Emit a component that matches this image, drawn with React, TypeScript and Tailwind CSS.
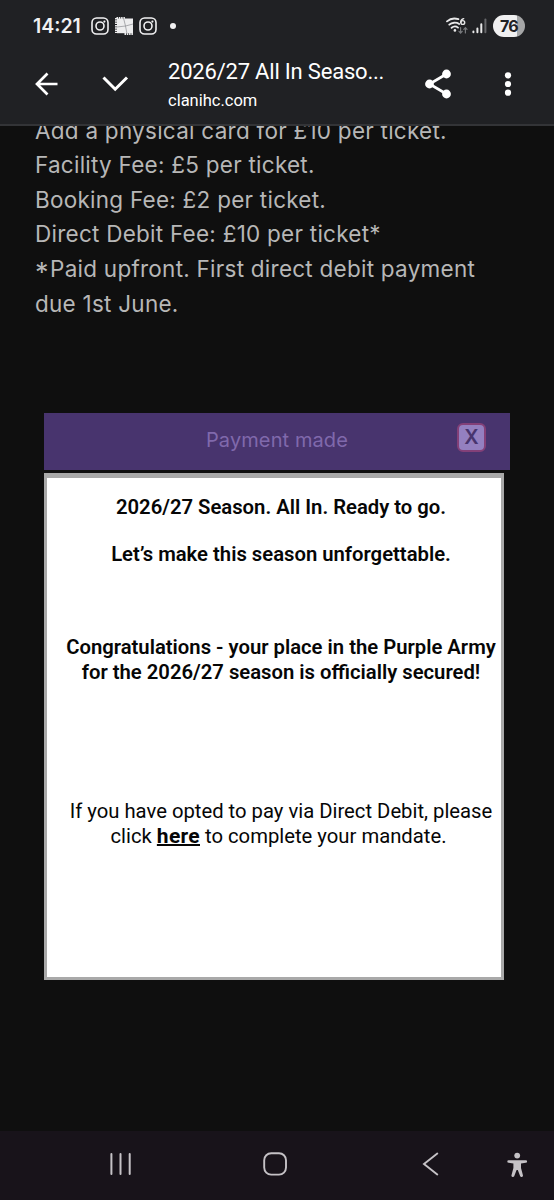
import { ReactNode } from 'react';
import clsx from 'clsx';

function InstagramIcon({ className }: { className?: string }) {
    return (
        <svg viewBox="0 0 18 18" className={clsx('h-[18px] w-[18px] shrink-0', className)} fill="none" stroke="#f1f1f2">
            <rect x="1" y="1" width="16" height="16" rx="4.6" strokeWidth="1.6" />
            <circle cx="9" cy="9" r="4" strokeWidth="1.6" />
            <circle cx="13.4" cy="4.6" r="1.1" fill="#f1f1f2" stroke="none" />
        </svg>
    );
}

function PhotoIcon({ className }: { className?: string }) {
    return (
        <svg viewBox="0 0 18 18" className={clsx('h-[18px] w-[18px] shrink-0', className)} fill="none">
            <path d="M2 1.5h16v14.7H2z" fill="#ededee" />
            <path d="M1 1v15M9.5 17H18" stroke="#ededee" strokeWidth="2" strokeDasharray="1.5 0.8" />
            <path d="M1.5 1H10" stroke="#ededee" strokeWidth="2" strokeDasharray="1.5 0.8" />
            <path d="M8.5 1l2 8 1.5 8M2 10l8.5-1L18 7" stroke="#8b8d90" strokeWidth="0.7" />
        </svg>
    );
}

function StatusBar() {
    return (
        <div className="flex h-[52px] items-center justify-between pl-[33px] pr-[29px]">
            <div className="flex items-center">
                <span className="w-[57.5px] whitespace-nowrap font-['Inter',sans-serif] text-[19.5px] font-semibold leading-6 text-[#f1f1f2]">
                    14:21
                </span>
                <InstagramIcon />
                <PhotoIcon className="ml-1.5" />
                <InstagramIcon className="ml-[6.5px]" />
                <span className="ml-[13px] h-1.5 w-1.5 rounded-full bg-[#f1f1f2]" />
            </div>
            <div className="flex items-center">
                <svg viewBox="0 0 22 18" className="h-[18px] w-[22px]" fill="none" strokeLinecap="round">
                    <path d="M1 4.4C4 1.7 8.6 1 12.4 2.2M3.3 7.7C5.8 5.4 10.2 5 13.2 7M5.6 10.8c2-1.7 4.6-1.7 6.4-.2" stroke="#e8e8e9" strokeWidth="1.8" />
                    <circle cx="8.9" cy="13.4" r="1.3" fill="#e8e8e9" />
                    <path d="M17.7 1.6c-2 .4-3 1.8-3 3.8" stroke="#e8e8e9" strokeWidth="1.4" />
                    <circle cx="16.8" cy="5.5" r="1.9" stroke="#e8e8e9" strokeWidth="1.4" />
                    <path d="M14.6 10.7v5M13 14.3l1.6 1.7 1.6-1.7M19.4 16v-5M17.8 12.4l1.6-1.7 1.6 1.7" stroke="#77797c" strokeWidth="1.2" />
                </svg>
                <svg viewBox="0 0 16 16" className="ml-1 h-4 w-4" strokeWidth="2" strokeLinecap="round">
                    <path d="M1.4 13.4v.8M5.4 10.5v3.7M9.3 6.3v7.9" stroke="#e8e8e9" />
                    <path d="M13.4 1.4v12.8" stroke="#66676a" />
                </svg>
                <div className="ml-[5px] flex h-[22px] w-8 items-center justify-center rounded-full bg-linear-to-r from-[#f0f0f1] from-76% to-[#a5a6a7] to-76% font-['Inter',sans-serif] text-[16px] font-bold tracking-[-0.8px] text-[#202124]">
                    76
                </div>
            </div>
        </div>
    );
}

function Toolbar() {
    return (
        <div className="flex h-[72px] items-start">
            <svg viewBox="0 0 24 24" className="ml-[34px] mt-5 h-6 w-6" fill="none" stroke="#fff" strokeWidth="2.7">
                <path d="M23.5 12H3M13.5 1.5L3 12l10.5 10.5" />
            </svg>
            <svg viewBox="0 0 28 18" className="ml-[43px] mt-[23px] h-[18px] w-7" fill="none" stroke="#fff" strokeWidth="3">
                <path d="M2.5 2.5L14.2 14.2 26 2.5" />
            </svg>
            <div className="ml-[39px] w-[240px] whitespace-nowrap font-['Roboto',sans-serif] text-white">
                <div className="mt-[6px] text-[22px] leading-7 tracking-[-0.2px]">2026/27 All In Seaso...</div>
                <div className="mt-[5px] text-[16.5px] leading-5">clanihc.com</div>
            </div>
            <svg viewBox="0 0 28 30" className="ml-[16px] mt-[17px] h-[30px] w-7" fill="#fff">
                <path d="M22.5 5L5.5 15l17 10" fill="none" stroke="#fff" strokeWidth="2.7" />
                <circle cx="22.5" cy="5" r="4.4" />
                <circle cx="5.5" cy="15" r="4.4" />
                <circle cx="22.5" cy="25" r="4.4" />
            </svg>
            <svg viewBox="0 0 8 26" className="ml-[52px] mt-[19px] h-[26px] w-2" fill="#fff">
                <circle cx="4" cy="4.3" r="3.1" />
                <circle cx="4" cy="13" r="3.1" />
                <circle cx="4" cy="21.7" r="3.1" />
            </svg>
        </div>
    );
}

function Line({ className, children }: { className?: string; children: ReactNode }) {
    return <div className={clsx('whitespace-nowrap', className)}>{children}</div>;
}

function Fees() {
    return (
        <div className="-mt-[12.4px] pl-[35px] font-['Inter',sans-serif] text-[22.5px] leading-[34.6px] tracking-[0.25px] text-[#b7b7b7]">
            <Line>Add a physical card for £10 per ticket.</Line>
            <Line>Facility Fee: £5 per ticket.</Line>
            <Line>Booking Fee: £2 per ticket.</Line>
            <Line>Direct Debit Fee: £10 per ticket*</Line>
            <Line>
                <span className="align-[-5px] text-[27px] leading-none tracking-[1.5px]">*</span>Paid upfront. First direct debit payment
            </Line>
            <Line>due 1st June.</Line>
        </div>
    );
}

function PaymentDialog() {
    return (
        <div className="ml-11 mt-[91.8px] w-[466px]">
            <div className="flex h-[57px] items-start bg-[#48346e]">
                <div className="w-[413px] pl-[162px] pt-[13px] font-['Inter',sans-serif] text-[20px] leading-7 tracking-[0.1px] text-[#8069ac]">
                    Payment made
                </div>
                <button
                    type="button"
                    aria-label="Close"
                    className="mt-[10px] flex h-[29px] w-[29px] items-center justify-center rounded-[6px] border-2 border-[#834078] bg-[#9480c0] font-['Inter',sans-serif] text-[20px] font-semibold text-[#48346e]"
                >
                    X
                </button>
            </div>
            <div className="mt-[3px] h-[507px] w-[460px] border-[3px] border-t-[5px] border-[#a9a9a9] bg-white pl-[14px] text-center font-['Roboto',sans-serif] text-[20.25px] leading-[25px] text-[#060606]">
                <div className="font-semibold">
                    <Line className="mt-[17px]">2026/27 Season. All In. Ready to go.</Line>
                    <Line className="mt-[22px]">Let’s make this season unforgettable.</Line>
                    <Line className="mt-[68px]">Congratulations - your place in the Purple Army</Line>
                    <Line>for the 2026/27 season is officially secured!</Line>
                </div>
                <Line className="mt-[114px]">If you have opted to pay via Direct Debit, please</Line>
                <Line className="pr-[5px]">
                    click <a href="#" className="text-[21px] font-bold tracking-[0.3px] underline decoration-2">here</a> to complete your mandate.
                </Line>
            </div>
        </div>
    );
}

function NavBar() {
    return (
        <div className="flex h-[69px] shrink-0 items-center bg-[#18131a] pb-[3px]">
            <svg viewBox="0 0 24 24" className="ml-[109px] h-6 w-6" stroke="#c5c2c6" strokeWidth="2" strokeLinecap="round">
                <path d="M2.4 2v20M11.5 2v20M20.7 2v20" />
            </svg>
            <svg viewBox="0 0 24 24" className="ml-[130px] h-6 w-6" fill="none" stroke="#c5c2c6" strokeWidth="1.9">
                <rect x="1.2" y="1.2" width="21.8" height="21.4" rx="7" />
            </svg>
            <svg viewBox="0 0 18 24" className="ml-[135px] h-6 w-[18px]" fill="none" stroke="#c5c2c6" strokeWidth="1.9" strokeLinecap="round">
                <path d="M15.3 1.5L2 12l13.3 10.5" />
            </svg>
            <svg viewBox="0 0 22 26" className="ml-[66px] mt-0.5 h-[26px] w-[22px]" fill="#c5c2c6">
                <circle cx="11.2" cy="3.6" r="2.9" />
                <path d="M2.6 8.2h17.2a1.3 1.3 0 0 1 0 2.6L15 11.4v4.5l2 7.6a1.5 1.5 0 0 1-2.8.8L11.8 18h-1.2l-2.4 6.3a1.5 1.5 0 0 1-2.8-.8l2-7.6v-4.5l-4.8-.6a1.3 1.3 0 0 1 0-2.6z" />
            </svg>
        </div>
    );
}

export default function App() {
    return (
        <div className="flex h-[1200px] w-[554px] flex-col overflow-hidden bg-[#0f0f0f]">
            <header className="h-[126px] shrink-0 border-b-2 border-[#333437] bg-[#202124]">
                <StatusBar />
                <Toolbar />
            </header>
            <main className="flex-1 overflow-hidden">
                <Fees />
                <PaymentDialog />
            </main>
            <NavBar />
        </div>
    );
}
